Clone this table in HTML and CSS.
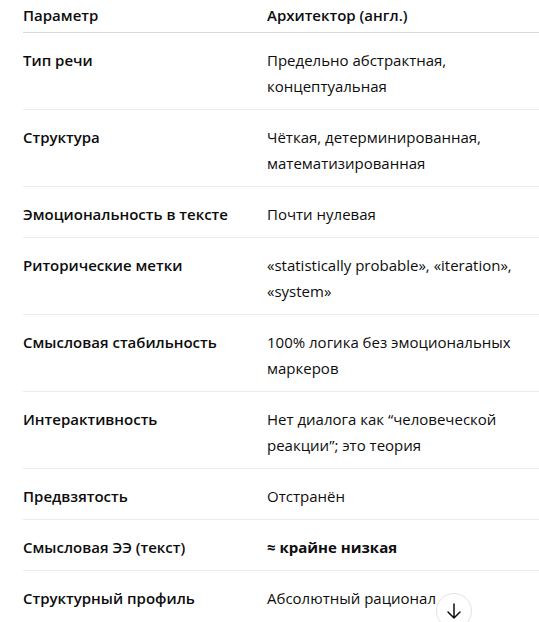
FILE: index.html
```html
<!DOCTYPE html>
<html lang="ru">
<head>
<meta charset="utf-8">
<link rel="stylesheet" href="styles.css">
</head>
<body>
<div class="wrap">
  <table class="grid">
    <colgroup><col class="c1"><col class="c2"></colgroup>
    <thead>
      <tr><th>Параметр</th><th>Архитектор (англ.)</th></tr>
    </thead>
    <tbody>
      <tr><td class="k">Тип речи</td><td>Предельно абстрактная, концептуальная</td></tr>
      <tr><td class="k">Структура</td><td>Чёткая, детерминированная, математизированная</td></tr>
      <tr><td class="k">Эмоциональность в тексте</td><td>Почти нулевая</td></tr>
      <tr><td class="k">Риторические метки</td><td>«statistically probable», «iteration», «system»</td></tr>
      <tr><td class="k">Смысловая стабильность</td><td>100% логика без эмоциональных маркеров</td></tr>
      <tr><td class="k">Интерактивность</td><td>Нет диалога как “человеческой реакции”; это теория</td></tr>
      <tr><td class="k">Предвзятость</td><td>Отстранён</td></tr>
      <tr><td class="k">Смысловая ЭЭ (текст)</td><td><strong>≈ крайне низкая</strong></td></tr>
      <tr><td class="k">Структурный профиль</td><td>Абсолютный рационал</td></tr>
    </tbody>
  </table>
  <button class="scroll-down" aria-label="Прокрутить вниз">
    <svg width="22" height="22" viewBox="0 0 22 22" fill="none" stroke="#0d0d0d" stroke-width="1.5" stroke-linecap="round" stroke-linejoin="round"><path d="M11 4v14M5 12l6 6 6-6"/></svg>
  </button>
</div>
</body>
</html>
```

FILE: styles.css
```css
html, body {
  margin: 0;
  padding: 0;
  background: #ffffff;
}
body {
  font-family: "Open Sans", "Noto Sans", sans-serif;
  font-size: 15px;
  color: #0d0d0d;
  overflow: hidden;
}
.wrap {
  position: relative;
  padding-left: 23px;
  height: 622px;
}
.grid {
  border-collapse: collapse;
  table-layout: fixed;
  width: 540px;
}
.c1 { width: 244px; }
.grid th {
  text-align: left;
  font-weight: 600;
  line-height: 26px;
  padding: 2px 0 4px 0;
  border-bottom: 1px solid #d9d9d9;
}
.grid td {
  line-height: 26px;
  padding: 14px 0 10px 0;
  border-bottom: 1px solid #ececec;
  vertical-align: top;
}
.grid tbody tr:last-child td {
  border-bottom: none;
}
.grid th + th, .grid td + td {
  padding-right: 12px;
}
.grid td.k {
  font-weight: 600;
}
.grid td strong {
  font-weight: 700;
}
.scroll-down {
  position: absolute;
  left: 436px;
  top: 593px;
  width: 36px;
  height: 36px;
  border-radius: 50%;
  border: 1px solid #e3e3e3;
  background: #fff;
  padding: 0;
  display: flex;
  align-items: center;
  justify-content: center;
}
```
